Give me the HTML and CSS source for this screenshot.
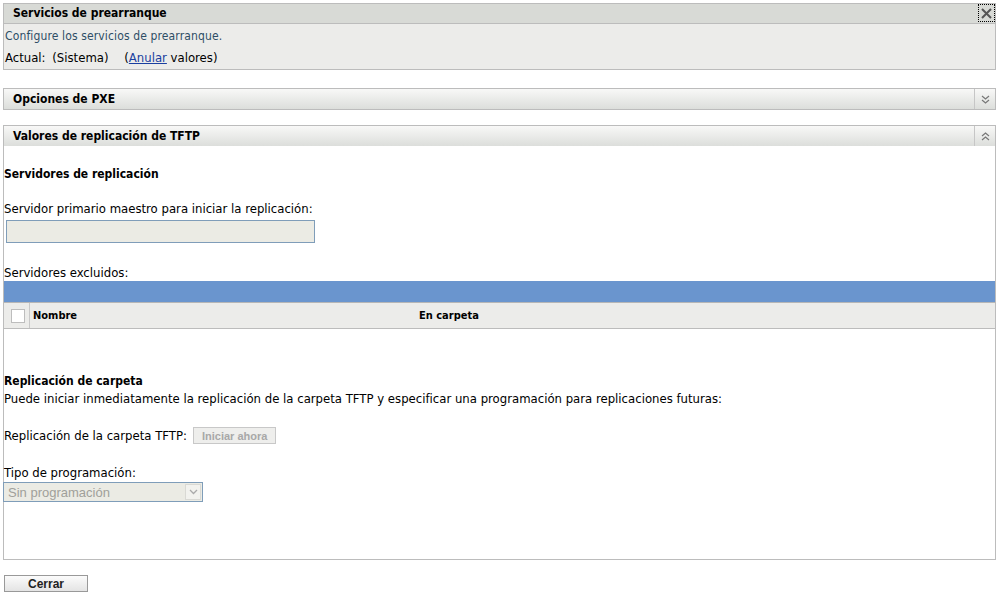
FILE: index.html
```html
<!DOCTYPE html>
<html lang="es">
  <head>
    <meta charset="UTF-8" />
    <title>Servicios de prearranque</title>
    <link rel="stylesheet" href="styles.css">
  </head>
  <body>
    <div class="panel info">
      <div class="panel-head flat">
        <span>Servicios de prearranque</span>
        <span class="close">
          <svg width="13" height="13" viewBox="0 0 13 13">
            <path d="M2 2 L11 11 M11 2 L2 11" stroke="#555" stroke-width="2" />
          </svg>
        </span>
      </div>
      <div class="info-body">
        <div class="desc">Configure los servicios de prearranque.</div>
        <div class="current">
          <span>Actual:</span>
          <span class="sys">(Sistema)</span>
          <span class="override">(<a href="#">Anular</a> valores)</span>
        </div>
      </div>
    </div>

    <div class="panel">
      <div class="panel-head">
        <span>Opciones de PXE</span>
        <span class="toggle">
          <svg width="9" height="9" viewBox="0 0 9 9">
            <path d="M1 1 L4.5 4 L8 1 M1 5 L4.5 8 L8 5" stroke="#777" stroke-width="1.2" fill="none" />
          </svg>
        </span>
      </div>
    </div>

    <div class="panel">
      <div class="panel-head">
        <span>Valores de replicación de TFTP</span>
        <span class="toggle">
          <svg width="9" height="9" viewBox="0 0 9 9">
            <path d="M1 4 L4.5 1 L8 4 M1 8 L4.5 5 L8 8" stroke="#777" stroke-width="1.2" fill="none" />
          </svg>
        </span>
      </div>
      <div class="panel-body">
        <h3 class="section">Servidores de replicación</h3>
        <label class="field-label">Servidor primario maestro para iniciar la replicación:</label>
        <input class="text-field" type="text" disabled />
        <div class="field-label excl">Servidores excluidos:</div>
        <div class="table-bar"></div>
        <div class="table-head">
          <div class="col-check"><span class="checkbox"></span></div>
          <div class="col-name">Nombre</div>
          <div class="col-folder">En carpeta</div>
        </div>

        <h3 class="section folder">Replicación de carpeta</h3>
        <div class="text">Puede iniciar inmediatamente la replicación de la carpeta TFTP y especificar una programación para replicaciones futuras:</div>
        <div class="start-row">
          Replicación de la carpeta TFTP:
          <button class="btn-disabled" disabled>Iniciar ahora</button>
        </div>
        <div class="field-label sched">Tipo de programación:</div>
        <div class="select">
          <span>Sin programación</span>
          <span class="select-arrow">
            <svg width="9" height="6" viewBox="0 0 9 6">
              <path d="M1 1 L4.5 4.5 L8 1" stroke="#aaa" stroke-width="1.3" fill="none" />
            </svg>
          </span>
        </div>
      </div>
    </div>

    <button class="btn-close">Cerrar</button>
  </body>
</html>
```

FILE: styles.css
```css
body {
  margin: 0;
  padding: 3px 3px 0 3px;
  font-family: "DejaVu Sans Condensed", "DejaVu Sans", sans-serif;
  font-size: 13px;
  line-height: 17px;
  color: #000;
  background: #fff;
}
.panel {
  border: 1px solid #bcbcbc;
  margin-bottom: 15px;
}
.info {
  margin-bottom: 18px;
}
.panel-head {
  position: relative;
  height: 20px;
  line-height: 20px;
  padding-left: 9px;
  font-weight: bold;
  font-size: 12px;
  background: linear-gradient(#f8f8f7, #dcdedb);
}
.panel-head.flat {
  height: 19px;
  line-height: 19px;
  background: #d8dad6;
  border-bottom: 1px solid #bcbcbc;
}
.close {
  position: absolute;
  right: 0;
  top: 0;
  width: 15px;
  height: 16px;
  border: 1px dotted #000;
  display: flex;
  align-items: center;
  justify-content: center;
}
.toggle {
  position: absolute;
  right: 0;
  top: 0;
  width: 20px;
  height: 20px;
  border-left: 1px solid #c6c6c6;
  display: flex;
  align-items: center;
  justify-content: center;
}
.info-body {
  background: #ececea;
  padding: 4px 1px 4px 1px;
  height: 37px;
}
.desc {
  color: #2e4e66;
  font-size: 12px;
  letter-spacing: 0.13px;
}
.current {
  margin-top: 4px;
}
.current .sys {
  margin-left: 3px;
}
.current .override {
  margin-left: 12px;
}
.current a {
  color: #1a3fa0;
}
.panel-body {
  display: flow-root;
  height: 413px;
}
.section {
  font-size: 12px;
  font-weight: bold;
  margin: 20px 0 0 0;
  line-height: 17px;
}
.field-label {
  display: block;
  margin-top: 17px;
}
.text-field {
  display: block;
  margin: 3px 0 0 2px;
  width: 309px;
  height: 23px;
  box-sizing: border-box;
  border: 1px solid #7f9db9;
  background: #ebebe4;
}
.excl {
  margin-top: 21px;
}
.table-bar {
  margin-top: 0;
  height: 21px;
  background: #6a95ce;
  border-bottom: 1px solid #b6b6b6;
}
.table-head {
  display: flex;
  height: 25px;
  align-items: center;
  background: #ececea;
  border-bottom: 1px solid #bcbcbc;
  font-weight: bold;
  font-size: 11px;
}
.col-check {
  width: 25px;
  height: 100%;
  border-right: 1px solid #c8c8c8;
  display: flex;
  align-items: center;
  justify-content: center;
}
.checkbox {
  width: 12px;
  height: 12px;
  background: #fff;
  border: 1px solid #bdbdbd;
  margin-left: 2px;
}
.col-name {
  width: 386px;
  padding-left: 3px;
}
.section.folder {
  margin-top: 44px;
}
.start-row {
  margin-top: 20px;
  display: flex;
  align-items: center;
}
.btn-disabled {
  margin-left: 6px;
  height: 17px;
  padding: 0 8px;
  font-family: "Liberation Sans", sans-serif;
  font-size: 11px;
  font-weight: bold;
  color: #a8a8a8;
  background: #eeeeec;
  border: 1px solid #c8c8c8;
}
.sched {
  margin-top: 20px;
}
.select {
  margin: 1px 0 0 -1px;
  width: 200px;
  height: 20px;
  box-sizing: border-box;
  border: 1px solid #7f9db9;
  background: #ebebe4;
  display: flex;
  align-items: center;
  justify-content: space-between;
  font-family: "Liberation Sans", sans-serif;
  font-size: 13px;
  color: #a0a09a;
  padding-left: 4px;
}
.select-arrow {
  width: 16px;
  height: 16px;
  margin-right: 1px;
  box-sizing: border-box;
  border: 1px solid #d9d9d4;
  background: #f2f2ee;
  display: flex;
  align-items: center;
  justify-content: center;
}
.btn-close {
  display: block;
  margin: 1px 0 0 1px;
  width: 84px;
  height: 17px;
  font-family: "Liberation Sans", sans-serif;
  font-size: 12px;
  font-weight: bold;
  padding: 0;
  color: #222;
  background: linear-gradient(#fbfbfb, #e4e4e4);
  border: 1px solid #999;
}
```
